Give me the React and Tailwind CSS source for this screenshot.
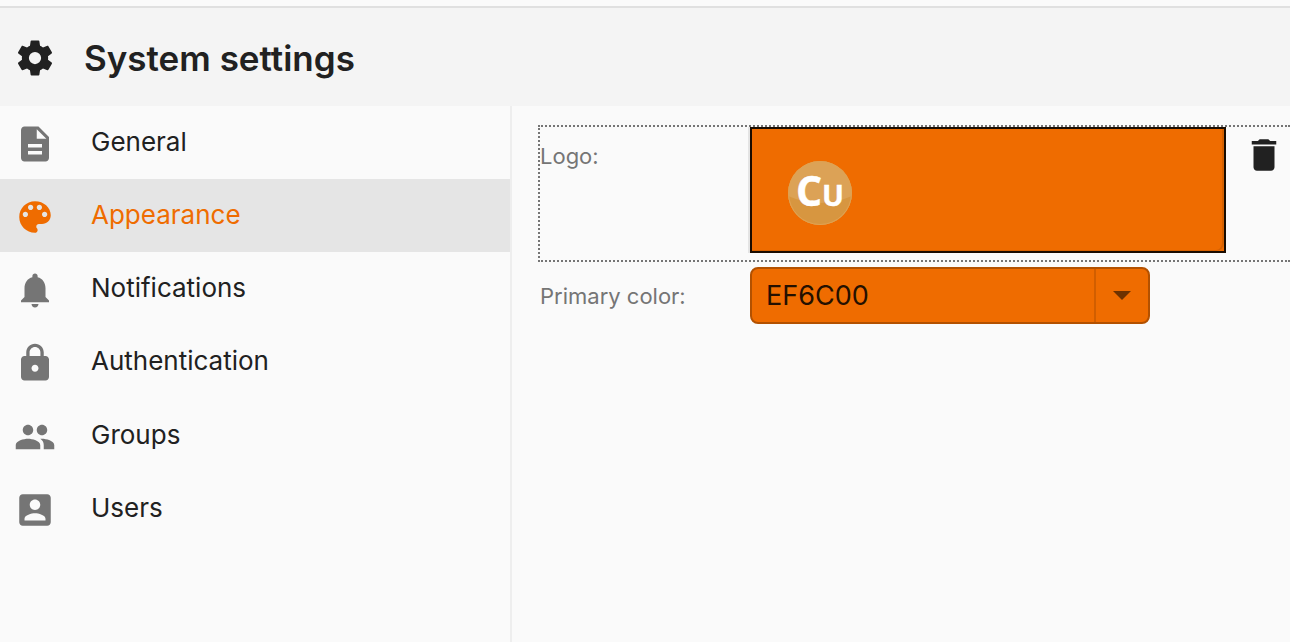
import { useState } from "react";

const ICONS = {
  settings:
    "M12 15.5A3.5 3.5 0 0 1 8.5 12 3.5 3.5 0 0 1 12 8.5a3.5 3.5 0 0 1 3.5 3.5 3.5 3.5 0 0 1-3.5 3.5m7.43-2.53c.04-.32.07-.64.07-.97 0-.33-.03-.66-.07-1l2.11-1.63c.19-.15.24-.42.12-.64l-2-3.46c-.12-.22-.39-.31-.61-.22l-2.49 1c-.52-.39-1.06-.73-1.69-.98l-.37-2.65A.506.506 0 0 0 14 2h-4c-.25 0-.46.18-.5.42l-.37 2.65c-.63.25-1.17.59-1.69.98l-2.49-1c-.22-.09-.49 0-.61.22l-2 3.46c-.13.22-.07.49.12.64L4.57 11c-.04.34-.07.67-.07 1 0 .33.03.65.07.97l-2.11 1.66c-.19.15-.25.42-.12.64l2 3.46c.12.22.39.3.61.22l2.49-1.01c.52.4 1.06.74 1.69.99l.37 2.65c.04.24.25.42.5.42h4c.25 0 .46-.18.5-.42l.37-2.65c.63-.26 1.17-.59 1.69-.99l2.49 1.01c.22.08.49 0 .61-.22l2-3.46c.12-.22.07-.49-.12-.64l-2.11-1.66z",
  document:
    "M14 2H6c-1.1 0-1.99.9-1.99 2L4 20c0 1.1.89 2 1.99 2H18c1.1 0 2-.9 2-2V8l-6-6zm2 16H8v-2h8v2zm0-4H8v-2h8v2zm-3-5V3.5L18.5 9H13z",
  palette:
    "M12 3c-4.97 0-9 4.03-9 9s4.03 9 9 9c.83 0 1.5-.67 1.5-1.5 0-.39-.15-.74-.39-1.01-.23-.26-.38-.61-.38-.99 0-.83.67-1.5 1.5-1.5H16c2.76 0 5-2.24 5-5 0-4.42-4.03-8-9-8zm-5.5 9c-.83 0-1.5-.67-1.5-1.5S5.67 9 6.5 9 8 9.67 8 10.5 7.33 12 6.5 12zm3-4C8.67 8 8 7.33 8 6.5S8.67 5 9.5 5s1.5.67 1.5 1.5S10.33 8 9.5 8zm5 0c-.83 0-1.5-.67-1.5-1.5S13.67 5 14.5 5s1.5.67 1.5 1.5S15.33 8 14.5 8zm3 4c-.83 0-1.5-.67-1.5-1.5S16.67 9 17.5 9s1.5.67 1.5 1.5-.67 1.5-1.5 1.5z",
  bell:
    "M12 22c1.1 0 2-.9 2-2h-4c0 1.1.89 2 2 2zm6-6v-5c0-3.07-1.64-5.64-4.5-6.32V4c0-.83-.67-1.5-1.5-1.5s-1.5.67-1.5 1.5v.68C7.63 5.36 6 7.92 6 11v5l-2 2v1h16v-1l-2-2z",
  lock:
    "M18 8h-1V6c0-2.76-2.24-5-5-5S7 3.24 7 6v2H6c-1.1 0-2 .9-2 2v10c0 1.1.9 2 2 2h12c1.1 0 2-.9 2-2V10c0-1.1-.9-2-2-2zm-6 9c-1.1 0-2-.9-2-2s.9-2 2-2 2 .9 2 2-.9 2-2 2zm3.1-9H8.9V6c0-1.71 1.39-3.1 3.1-3.1 1.71 0 3.1 1.39 3.1 3.1v2z",
  group:
    "M16 11c1.66 0 2.99-1.34 2.99-3S17.66 5 16 5c-1.66 0-3 1.34-3 3s1.34 3 3 3zm-8 0c1.66 0 2.99-1.34 2.99-3S9.66 5 8 5C6.34 5 5 6.34 5 8s1.34 3 3 3zm0 2c-2.33 0-7 1.17-7 3.5V19h14v-2.5c0-2.33-4.67-3.5-7-3.5zm8 0c-.29 0-.62.02-.97.05 1.16.84 1.97 1.97 1.97 3.45V19h6v-2.5c0-2.33-4.67-3.5-7-3.5z",
  account:
    "M3 5v14c0 1.1.89 2 2 2h14c1.1 0 2-.9 2-2V5c0-1.1-.9-2-2-2H5c-1.11 0-2 .9-2 2zm12 4c0 1.66-1.34 3-3 3s-3-1.34-3-3 1.34-3 3-3 3 1.34 3 3zm-9 8c0-2 4-3.1 6-3.1s6 1.1 6 3.1v1H6v-1z",
  trash:
    "M6 19c0 1.1.9 2 2 2h8c1.1 0 2-.9 2-2V7H6v12zM19 4h-3.5l-1-1h-5l-1 1H5v2h14V4z",
};

function Icon({ name, className = "" }) {
  return (
    <svg viewBox="0 0 24 24" aria-hidden="true" className={`size-[42px] shrink-0 fill-current ${className}`}>
      <path d={ICONS[name]} />
    </svg>
  );
}

const MENU = [
  { label: "General", icon: "document" },
  { label: "Appearance", icon: "palette" },
  { label: "Notifications", icon: "bell" },
  { label: "Authentication", icon: "lock" },
  { label: "Groups", icon: "group" },
  { label: "Users", icon: "account" },
];

function CopperLogo() {
  return (
    <svg viewBox="0 0 66 66" role="img" aria-label="Cu" className="size-[66px]">
      <circle cx="33" cy="33" r="32" fill="#dca256" />
      <path d="M1.14 36Q33 50 64.86 36A32 32 0 0 1 1.14 36Z" fill="#d79640" />
      <circle cx="33" cy="33" r="31.5" fill="none" stroke="#e0a252" />
      <g fill="#fff" stroke="#fff" strokeWidth="0.4" fontFamily="'Open Sans', 'Noto Sans', sans-serif" fontWeight="700">
        <text x="9" y="46" fontSize="41">C</text>
        <text x="35" y="46" fontSize="29">U</text>
      </g>
    </svg>
  );
}

export default function App() {
  const [active, setActive] = useState("Appearance");
  const [color, setColor] = useState("EF6C00");

  return (
    <div className="flex min-h-screen flex-col bg-[#fafafa] pt-1.5 font-['Inter',sans-serif] text-[#212121]">
      <header className="flex h-[100px] shrink-0 items-center gap-7 border-t-2 border-[#e0e0e0] bg-[#f4f4f4] px-3.5 pt-0.5">
        <Icon name="settings" />
        <h1 className="text-[35px] font-semibold leading-[44px]">System settings</h1>
      </header>

      <div className="flex grow">
        <nav aria-label="Settings" className="w-[512px] shrink-0 border-r-2 border-[#eeeeee]">
          <ul className="grid h-[439px] grid-rows-6">
            {MENU.map(({ label, icon }) => {
              const selected = label === active;
              return (
                <li key={label}>
                  <button
                    type="button"
                    aria-current={selected ? "page" : undefined}
                    onClick={() => setActive(label)}
                    className={`flex h-full w-full items-start gap-[35px] px-3.5 pt-[17px] text-left text-[26px] leading-[38px] ${
                      selected ? "bg-[#e5e5e5] text-[#ef6c00]" : ""
                    }`}
                  >
                    <Icon name={icon} className={selected ? "" : "text-[#757575]"} />
                    {label}
                  </button>
                </li>
              );
            })}
          </ul>
        </nav>

        <main className="min-w-0 grow pl-[26px] pt-[19px]">
          <section
            aria-labelledby="logo-label"
            className="flex items-start border-2 border-r-0 border-dotted border-[#757575] pb-[7px]"
          >
            <h2 id="logo-label" className="w-[210px] shrink-0 pt-[15px] text-[22px] font-normal leading-7 text-[#757575]">
              Logo:
            </h2>
            <button
              type="button"
              aria-label="Change logo"
              className="h-[126px] w-[476px] border-2 border-[#1a0c00] bg-[#ef6c00] shadow-[-2px_0_0_#e4e4e4]"
            >
              <span className="flex h-full items-center rounded-br-lg border-b border-r-2 border-[#d66100] pl-[35px] pt-1.5">
                <CopperLogo />
              </span>
            </button>
            <button type="button" aria-label="Delete logo" className="ml-[17px] mt-[7px] shrink-0">
              <Icon name="trash" />
            </button>
          </section>

          <section className="mt-[5px] flex items-center pl-0.5">
            <label htmlFor="primary-color" className="w-[210px] shrink-0 text-[22px] leading-7 text-[#757575]">
              Primary color:
            </label>
            <div className="flex h-[57px] w-[400px] overflow-hidden rounded-lg border-2 border-[#b35100] bg-[#ef6c00]">
              <input
                id="primary-color"
                type="text"
                value={color}
                onChange={(event) => setColor(event.target.value)}
                className="min-w-0 grow bg-transparent px-3.5 pt-0.5 text-[27px] text-[#241000] outline-none"
              />
              <button
                type="button"
                aria-label="Choose color"
                className="flex w-[54px] shrink-0 items-center justify-center border-l-2 border-[#d15e00]"
              >
                <svg viewBox="0 0 18 9" aria-hidden="true" className="h-[9px] w-[18px] fill-[#6c3100]">
                  <path d="M0 0h18L9 9z" />
                </svg>
              </button>
            </div>
          </section>
        </main>
      </div>
    </div>
  );
}
